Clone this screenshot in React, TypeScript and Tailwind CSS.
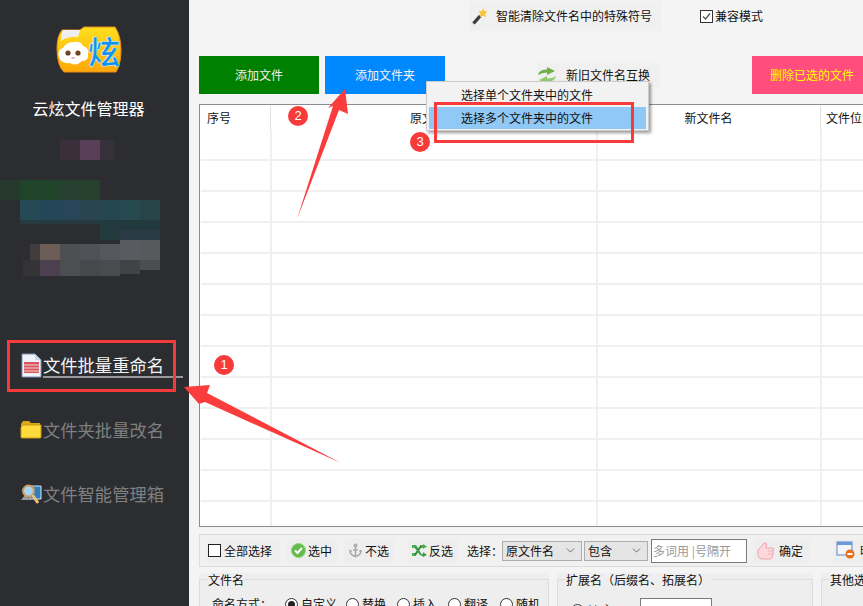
import { Anchor, ChevronDown } from "lucide-react";

const FONT = "font-['Noto_Sans_CJK_SC','Liberation_Sans',sans-serif]";

// blurred block in the sidebar: [x, y, w, h, colour]
const mosaic: [number, number, number, number, string][] = [
  [60, 0, 20, 20, "#3a2f3a"], [80, 0, 20, 20, "#5a3f58"], [100, 0, 14, 20, "#35303a"],
  [0, 40, 20, 20, "#27382c"], [20, 40, 40, 20, "#1f4429"], [60, 40, 20, 20, "#25402e"], [80, 40, 20, 20, "#27402e"],
  [20, 60, 20, 20, "#234a55"], [40, 60, 20, 20, "#234756"], [60, 60, 20, 20, "#28465a"], [80, 60, 20, 20, "#2a4450"],
  [100, 60, 20, 20, "#26474f"], [120, 60, 20, 20, "#264a4f"], [140, 60, 20, 20, "#274548"],
  [20, 80, 80, 4, "#263a40"], [100, 80, 60, 20, "#22393e"], [120, 90, 40, 10, "#2a3a44"],
  [30, 104, 10, 16, "#423c3c"], [40, 104, 20, 16, "#6b5c56"], [60, 104, 20, 16, "#4e4f53"], [80, 104, 20, 16, "#505156"],
  [100, 104, 20, 16, "#56575c"], [120, 100, 20, 20, "#5a5b60"], [140, 100, 20, 20, "#58595d"],
  [23, 120, 17, 16, "#343335"], [40, 120, 20, 16, "#4c3f50"], [60, 120, 20, 16, "#4d4e52"], [80, 120, 20, 16, "#47484c"],
  [100, 120, 20, 16, "#4a4b4f"], [120, 120, 20, 14, "#424347"], [140, 120, 20, 10, "#4c4d50"],
];

const Logo = () => (
  <svg width="66" height="48" viewBox="0 0 66 48">
    <defs>
      <linearGradient id="lg" x1="0" y1="0" x2="0" y2="1">
        <stop offset="0" stopColor="#ffdf1e" />
        <stop offset="1" stopColor="#ffa806" />
      </linearGradient>
    </defs>
    <path d="M1 22Q1 10 6 4H24L28 1H59Q65 10 65 24Q65 38 60 46H8Q1 40 1 22Z" fill="url(#lg)" stroke="#e88a1c" />
    <path d="M7 4H24L22 11Q13 10 5 15Q5 8 7 4Z" fill="#efefef" />
    <path d="M18 16Q25 15 27 20Q33 21 32 28Q33 35 26 35Q20 41 14 37Q5 38 3 31Q1 24 7 22Q10 16 18 16Z" fill="#fff" />
    <circle cx="12" cy="27" r="2.6" fill="#6e4420" />
    <circle cx="22" cy="27" r="2.6" fill="#6e4420" />
    <ellipse cx="17" cy="32" rx="2" ry="1" fill="#f2a8a0" />
    <text x="48" y="38" textAnchor="middle" fontSize="32" fontWeight="700" fill="#0f92f2" stroke="#e8f4ff" strokeWidth="0.5" fontFamily="Noto Sans CJK SC">炫</text>
  </svg>
);

const DocIcon = () => (
  <svg width="21" height="25" viewBox="0 0 21 25">
    <path d="M1 1H14L20 7V24H1Z" fill="#f0f3f9" stroke="#7f94b8" />
    <path d="M14 1V7H20Z" fill="#c9d6e8" />
    <path d="M3 9H18V20H3Z" fill="#d8555c" />
    <path d="M3 12H18M3 15H18M3 18H18" stroke="#f4d8da" strokeWidth="1" />
  </svg>
);

const FolderIcon = () => (
  <svg width="22" height="19" viewBox="0 0 22 19">
    <path d="M1 4L3 1H9L11 3H20V9H1Z" fill="#d9a90f" />
    <path d="M1 17V7L3 5H21V17Q21 18 20 18H2Q1 18 1 17Z" fill="#ffdc3c" stroke="#c79a10" />
  </svg>
);

const SearchPicIcon = () => (
  <svg width="22" height="22" viewBox="0 0 22 22">
    <path d="M10 3H21V16H10Z" fill="#2f7fc0" stroke="#dfe6ee" />
    <path d="M1 17L5 12L12 17Z" fill="#9a9a9a" />
    <circle cx="8.5" cy="8" r="5.5" fill="#a8d4f4" stroke="#d29a5c" strokeWidth="2" />
    <path d="M12.5 12L18 20" stroke="#eec07a" strokeWidth="3" />
  </svg>
);

const NavItem = ({ icon, label, active }: { icon: React.ReactNode; label: string; active?: boolean }) => (
  <div className="relative flex h-[30px] items-center pl-[20px]">
    <div className="flex w-[22px] justify-center">{icon}</div>
    <span className={`ml-[1px] text-[17.3px] leading-[30px] ${active ? "text-[#f4f4f4]" : "text-[#808080]"}`}>{label}</span>
    {active && <div className="absolute left-[43px] top-[26px] h-[2px] w-[140px] bg-[#999]" />}
  </div>
);

const Wand = () => (
  <svg width="16" height="18" viewBox="0 0 16 18">
    <path d="M1.5 16.5L9 8" stroke="#3c3c3c" strokeWidth="3.4" />
    <path d="M8 9L10 7" stroke="#e8e8e8" strokeWidth="3.4" />
    <path d="M11 1L12 4L15.5 4.5L13 7L14 10.5L11 8.5L8 10L8.5 6.5L6.5 4.5L10 4Z" fill="#f6c531" />
  </svg>
);

const SwapIcon = () => (
  <svg width="20" height="17" viewBox="0 0 20 17">
    <path d="M1 8Q2 2.5 10 2.5V0L18 4L10 8V5.5Q5 5.5 1 8Z" fill="#6fb04a" />
    <path d="M19 9Q18 14.5 10 14.5V17L2 13L10 9V11.5Q15 11.5 19 9Z" fill="#93cc72" />
  </svg>
);

const CheckCircle = () => (
  <svg width="15" height="15" viewBox="0 0 15 15">
    <circle cx="7.5" cy="7.5" r="7" fill="#66bb4e" stroke="#8bd672" />
    <path d="M4 7.5L6.5 10L11 5" fill="none" stroke="#fff" strokeWidth="2" />
  </svg>
);

const ShuffleIcon = () => (
  <svg width="15" height="13" viewBox="0 0 15 13">
    <path d="M0 1H4L9 10H11V8L15 11L11 13Z" fill="#3f9e46" />
    <path d="M0 1H4V4H0ZM0 9H4V12H0ZM8 1H11V0L15 2.5L11 5V4H8Z" fill="#4fae55" />
    <path d="M3 11L9 2" stroke="#2f8a38" strokeWidth="2" />
    <path d="M3 2L9 11" stroke="#3f9e46" strokeWidth="2" />
  </svg>
);

const ThumbIcon = () => (
  <svg width="18" height="18" viewBox="0 0 18 18">
    <path d="M1 9Q1 7 3 6L7 1Q9 0 9.5 2L9 6H15Q17 6 16.5 8L15.5 15Q15 17 13 17H5Q2 17 1 14Z" fill="#fcd7dc" stroke="#f0a4b0" />
    <path d="M11 9H16M11 12H15.5" stroke="#f4b4be" />
  </svg>
);

const WindowIcon = () => (
  <svg width="20" height="19" viewBox="0 0 20 19">
    <rect x="1" y="1" width="15" height="13" fill="#f2f6fc" stroke="#5b86c8" />
    <rect x="1" y="1" width="15" height="3" fill="#6f97d6" />
    <circle cx="14" cy="13" r="4.5" fill="#e8701a" />
    <rect x="11.5" y="12" width="5" height="2" fill="#fff" />
  </svg>
);

const ToolBtn = ({ w, ml, icon, label }: { w: string; ml: string; icon: React.ReactNode; label: string }) => (
  <div className={`flex h-[24px] shrink-0 items-center gap-[2px] bg-[#eeeeee] pl-[4px] ${w} ${ml}`}>
    {icon}
    <span>{label}</span>
  </div>
);

const Radio = ({ label, on, w }: { label: string; on?: boolean; w: string }) => (
  <div className={`flex shrink-0 items-center gap-[3px] ${w}`}>
    <span className="flex h-[13px] w-[13px] items-center justify-center rounded-full border border-[#333] bg-white">
      {on && <span className="h-[7px] w-[7px] rounded-full bg-[#222]" />}
    </span>
    <span>{label}</span>
  </div>
);

const Group = ({ w, ml, title, children }: { w: string; ml: string; title: string; children?: React.ReactNode }) => (
  <div className={`relative h-[60px] shrink-0 bg-[#eeeeee] ${w} ${ml}`}>
    <div className="absolute inset-x-0 bottom-0 top-[6px] border border-[#dcdcdc]" />
    <span className="absolute left-[8px] top-0 bg-[#eeeeee] px-[1px] text-[12px] leading-[14px]">{title}</span>
    {children}
  </div>
);

const Select = ({ label, w }: { label: string; w: string }) => (
  <div className={`flex h-[20px] shrink-0 items-center justify-between border border-[#adadad] bg-[#e5e5e5] pl-[3px] pr-[4px] ${w}`}>
    <span>{label}</span>
    <ChevronDown size={13} strokeWidth={1.5} className="text-[#555]" />
  </div>
);

const rows = Array.from({ length: 13 });

export default function App() {
  return (
    <div className={`relative flex h-[606px] w-[863px] overflow-hidden bg-[#f4f4f4] text-[12px] text-[#111] ${FONT}`}>
      {/* sidebar */}
      <aside className="flex w-[189px] shrink-0 flex-col bg-[#2b2d31]">
        <div className="ml-[56px] mt-[26px]">
          <Logo />
        </div>
        <div className="mt-[23px] w-[177px] text-center text-[16px] leading-[22px] text-white">云炫文件管理器</div>
        <svg width="160" height="136" viewBox="0 0 160 136" className="mt-[21px] shrink-0">
          {mosaic.map(([x, y, w, h, c], i) => (
            <rect key={i} x={x} y={y} width={w} height={h} fill={c} />
          ))}
        </svg>
        <div className="mt-[74px] flex flex-col gap-[34.5px]">
          <NavItem icon={<DocIcon />} label="文件批量重命名" active />
          <NavItem icon={<FolderIcon />} label="文件夹批量改名" />
          <NavItem icon={<SearchPicIcon />} label="文件智能管理箱" />
        </div>
      </aside>

      {/* main panel */}
      <main className="flex min-w-0 flex-1 flex-col pl-[10px]">
        <div className="mt-[1px] flex h-[30px] items-center">
          <div className="ml-[270px] flex h-[30px] w-[192px] shrink-0 items-center gap-[8px] bg-[#f0f0f0] pl-[3px]">
            <Wand />
            <span>智能清除文件名中的特殊符号</span>
          </div>
          <div className="ml-[39px] flex shrink-0 items-center gap-[2px]">
            <span className="flex h-[13px] w-[13px] items-center justify-center border border-[#333] bg-white text-[#444]">
              <svg width="11" height="11" viewBox="0 0 11 11">
                <path d="M2 5.5L4.5 8L9 2.5" fill="none" stroke="#555" strokeWidth="1.4" />
              </svg>
            </span>
            <span>兼容模式</span>
          </div>
        </div>

        <div className="mt-[25px] flex h-[38px] items-center">
          <div className="flex h-[38px] w-[120px] shrink-0 items-center justify-center bg-[#008000] text-[#f0f0f0]">添加文件</div>
          <div className="ml-[6px] flex h-[38px] w-[120px] shrink-0 items-center justify-center bg-[#0088ff] text-[#f4f4f4]">添加文件夹</div>
          <div className="ml-[92px] flex h-[24px] w-[123px] shrink-0 items-center gap-[9px] bg-[#f0f0f0]">
            <SwapIcon />
            <span>新旧文件名互换</span>
          </div>
          <div className="ml-[92px] flex h-[38px] w-[120px] shrink-0 items-center bg-[#ff4d7d] pl-[18px] text-[#ffff00]">删除已选的文件</div>
        </div>

        {/* file table */}
        <div className="mt-[10px] h-[423px] w-[680px] shrink-0 overflow-hidden border border-[#8c8c94] bg-white">
          <div className="flex h-[25px] items-center">
            <div className="h-[24px] w-[71px] shrink-0 border-r border-[#e0e0e0] pl-[7px] leading-[24px]">序号</div>
            <div className="h-[24px] w-[326px] shrink-0 text-center leading-[24px]">原文件名</div>
            <div className="h-[24px] w-[224px] shrink-0 border-r border-[#e0e0e0] text-center leading-[24px]">新文件名</div>
            <div className="h-[24px] flex-1 pl-[5px] leading-[24px]">文件位置</div>
          </div>
          {rows.map((_, i) => (
            <div key={i} className="ml-[1px] flex h-[31px] border-b-2 border-[#f0f0f0]">
              <div className="w-[71px] border-r-2 border-[#f0f0f0]" />
              <div className="w-[326px] border-r-2 border-[#f0f0f0]" />
              <div className="w-[224px] border-r-2 border-[#f0f0f0]" />
            </div>
          ))}
        </div>

        {/* selection toolbar */}
        <div className="mt-[7px] flex h-[33px] w-[680px] shrink-0 items-center border border-[#dcdcdc] bg-[#f1f1f1] pl-[7px]">
          <div className="flex h-[24px] w-[73px] shrink-0 items-center gap-[3px] bg-[#eeeeee] pl-[1px]">
            <span className="h-[13px] w-[13px] border border-[#222] bg-white" />
            <span>全部选择</span>
          </div>
          <ToolBtn w="w-[50px]" ml="ml-[7px]" icon={<CheckCircle />} label="选中" />
          <ToolBtn w="w-[50px]" ml="ml-[7px]" icon={<Anchor size={15} strokeWidth={2.4} className="text-[#a8a8a8]" />} label="不选" />
          <ToolBtn w="w-[50px]" ml="ml-[14px]" icon={<ShuffleIcon />} label="反选" />
          <span className="ml-[9px] w-[35px] shrink-0 whitespace-nowrap">选择：</span>
          <Select label="原文件名" w="w-[80px]" />
          <div className="ml-[2px]">
            <Select label="包含" w="w-[64px]" />
          </div>
          <div className="ml-[3px] flex h-[24px] w-[96px] shrink-0 items-center border border-[#7a7a7a] bg-white pl-[1px] text-[#999]">多词用 |号隔开</div>
          <div className="ml-[7px] flex h-[24px] w-[56px] shrink-0 items-center gap-[4px] bg-[#eeeeee] pl-[3px]">
            <ThumbIcon />
            <span>确定</span>
          </div>
          <div className="ml-[24px] flex h-[24px] w-[60px] shrink-0 items-center gap-[4px] bg-[#eeeeee] pl-[2px]">
            <WindowIcon />
            <span>明细</span>
          </div>
        </div>

        {/* option groups, cut by the bottom of the window */}
        <div className="mt-[6px] flex w-[700px] shrink-0">
          <Group w="w-[350px]" ml="ml-0" title="文件名">
            <div className="absolute left-[13px] top-[23px] flex items-center leading-[16px]">
              <span className="w-[73px] shrink-0">命名方式：</span>
              <Radio label="自定义" on w="w-[61px]" />
              <Radio label="替换" w="w-[51px]" />
              <Radio label="插入" w="w-[51px]" />
              <Radio label="翻译" w="w-[52px]" />
              <Radio label="随机" w="w-[44px]" />
            </div>
          </Group>
          <Group w="w-[256px]" ml="ml-[8px]" title="扩展名（后缀名、拓展名）">
            <div className="absolute left-[14px] top-[25px] flex items-center">
              <Radio label="(.) 主" w="w-[69px]" />
              <span className="h-[24px] w-[72px] border border-[#7a7a7a] bg-white" />
            </div>
          </Group>
          <Group w="w-[60px]" ml="ml-[8px]" title="其他选项" />
        </div>
      </main>

      {/* dropdown menu */}
      <div className="absolute left-[426px] top-[81px] h-[50px] w-[223px] border border-[#cccccc] bg-[#f2f2f2] p-[2px] shadow-[2px_2px_3px_rgba(0,0,0,0.4)]">
        <div className="h-[22px] pl-[32px] leading-[22px]">选择单个文件夹中的文件</div>
        <div className="mt-[1px] h-[22px] bg-[#90c8f6] pl-[32px] leading-[22px]">选择多个文件夹中的文件</div>
      </div>

      {/* tutorial annotations */}
      <div className="absolute left-[7px] top-[340px] h-[52px] w-[169px] border-[3px] border-[#f73a3a]" />
      <div className="absolute left-[434px] top-[102px] h-[41px] w-[200px] border-[3px] border-[#f73a3a]" />
      <svg width="863" height="606" viewBox="0 0 863 606" className="pointer-events-none absolute left-0 top-0">
        <polygon points="184,387 210,385 207,393 341,463 205,402 199,404" fill="#fb3c3c" />
        <polygon points="345,89 348,114 339,110 297,219 333,106 328,108" fill="#fb3c3c" />
      </svg>
      {[
        { n: "1", c: "left-[214px] top-[355px]" },
        { n: "2", c: "left-[288px] top-[106px]" },
        { n: "3", c: "left-[410px] top-[132px]" },
      ].map((b) => (
        <div key={b.n} className={`absolute flex h-[20px] w-[20px] items-center justify-center rounded-full bg-[#f73a3a] font-['Liberation_Sans',sans-serif] text-[13px] text-white ${b.c}`}>
          {b.n}
        </div>
      ))}
    </div>
  );
}
